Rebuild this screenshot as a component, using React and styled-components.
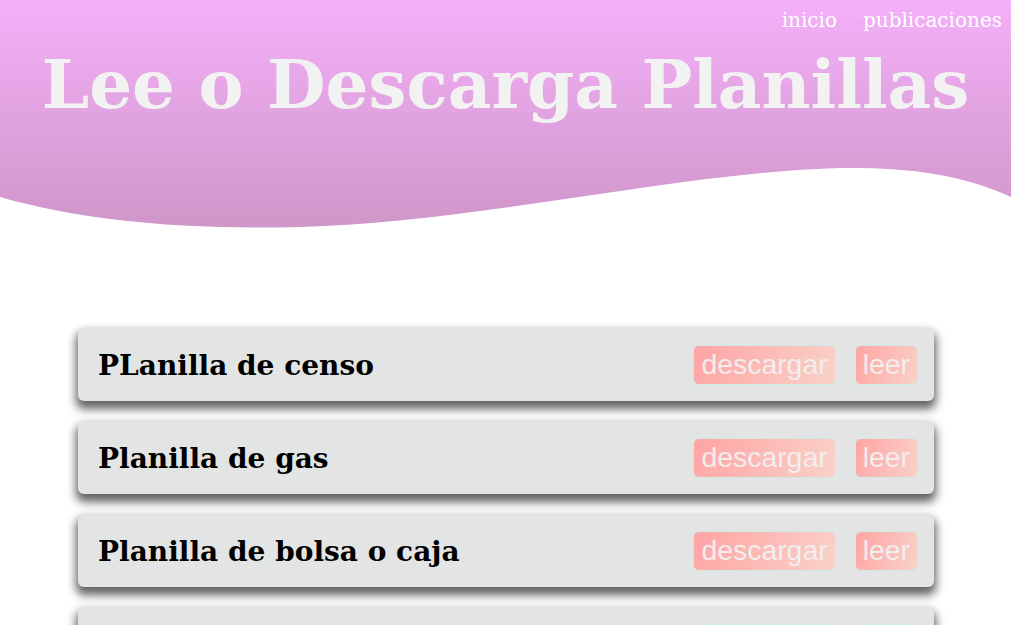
import React from "react";
import styled, { createGlobalStyle } from "styled-components";

const GlobalStyle = createGlobalStyle`
  * {
    box-sizing: border-box;
  }
  body {
    margin: 0;
    background: #ffffff;
    font-family: "DejaVu Serif", serif;
    overflow: hidden;
  }
`;

const Header = styled.header`
  position: relative;
  height: 230px;
  background: linear-gradient(180deg, #f4b0f9 0%, #cf96c8 100%);
  display: flex;
  flex-direction: column;
`;

const Nav = styled.nav`
  display: flex;
  justify-content: flex-end;
  gap: 26px;
  padding: 8px 9px 0 0;
`;

const NavLink = styled.a`
  color: #ffffff;
  font-size: 20px;
  text-decoration: none;
`;

const Title = styled.h1`
  margin: 16px 0 0;
  text-align: center;
  color: #f2f2f2;
  font-size: 67.5px;
  font-weight: bold;
  line-height: 1.1;
`;

const Wave = styled.svg`
  position: absolute;
  left: 0;
  bottom: 0;
  width: 100%;
  height: 62px;
  display: block;
`;

const List = styled.main`
  display: flex;
  flex-direction: column;
  gap: 20px;
  padding: 98px 77px 40px 78px;
`;

const Card = styled.div`
  display: flex;
  align-items: center;
  height: 73px;
  padding: 2px 16px 0 20px;
  background: #e3e5e4;
  border-radius: 6px;
  box-shadow: 0 6px 10px 2px rgba(0, 0, 0, 0.62);
`;

const CardTitle = styled.h2`
  flex: 1;
  margin: 0;
  font-size: 28px;
  font-weight: bold;
  color: #000000;
`;

const Actions = styled.div`
  display: flex;
  gap: 19px;
  margin-top: -2px;
`;

const Button = styled.button`
  height: 40px;
  padding: 0 7px;
  border: 1px solid #cfeae6;
  border-radius: 6px;
  background: linear-gradient(110deg, #ffa4a4 0%, #f9d2c8 100%);
  color: #f3eded;
  font-family: "Liberation Sans", Arial, sans-serif;
  font-size: 28.4px;
  line-height: 1;
  cursor: pointer;
`;

const planillas = [
  "PLanilla de censo",
  "Planilla de gas",
  "Planilla de bolsa o caja",
  "Planilla de luz",
];

export default function App() {
  return (
    <>
      <GlobalStyle />
      <Header>
        <Nav>
          <NavLink href="#">inicio</NavLink>
          <NavLink href="#">publicaciones</NavLink>
        </Nav>
        <Title>Lee o Descarga Planillas</Title>
        <Wave viewBox="0 0 1011 62" preserveAspectRatio="none">
          <path
            d="M0 29 C 80 52, 180 62, 300 59 C 480 54, 680 4, 840 0 C 920 -1, 970 10, 1011 29 L 1011 62 L 0 62 Z"
            fill="#ffffff"
          />
        </Wave>
      </Header>
      <List>
        {planillas.map((p) => (
          <Card key={p}>
            <CardTitle>{p}</CardTitle>
            <Actions>
              <Button>descargar</Button>
              <Button>leer</Button>
            </Actions>
          </Card>
        ))}
      </List>
    </>
  );
}
